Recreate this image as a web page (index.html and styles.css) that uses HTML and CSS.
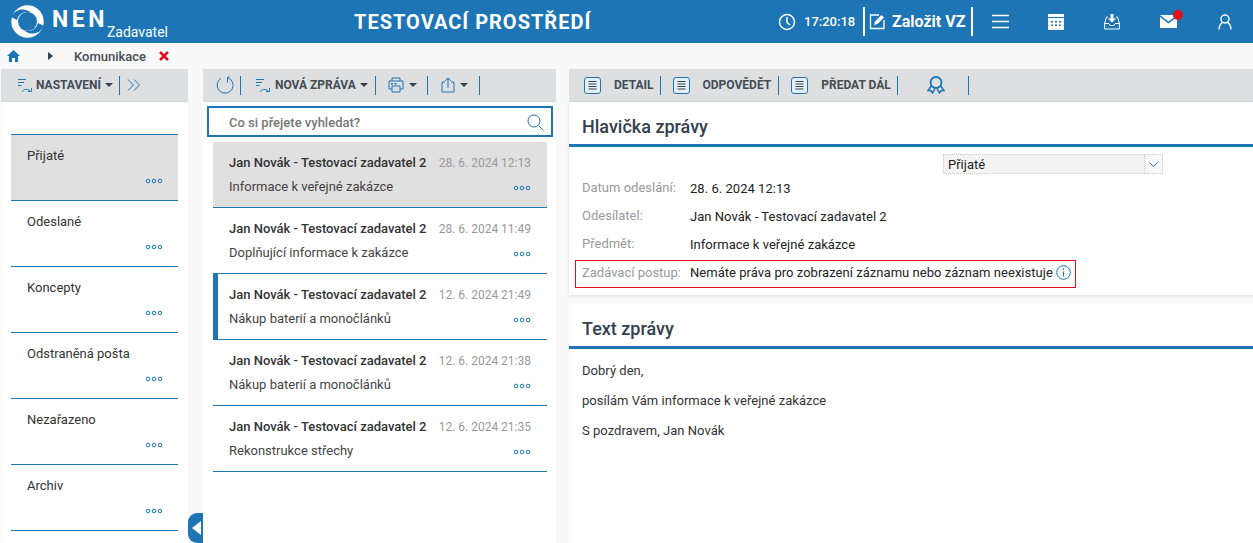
FILE: index.html
```html
<!DOCTYPE html>
<html lang="cs">
<head>
<meta charset="utf-8">
<title>NEN Zadavatel</title>
<link rel="stylesheet" href="styles.css">
</head>
<body>
<svg class="defs" width="0" height="0">
  <defs>
    <symbol id="doc" viewBox="0 0 17 17"><rect x=".5" y=".5" width="16" height="16" rx="2.500" fill="#e6eef5" stroke="#1d75b5" stroke-width="1"/><path d="M4.500 4.500h8M4.500 7h8M4.500 9.500h8M4.500 12h8" stroke="#33404d" stroke-width="1" fill="none"/></symbol>
    <symbol id="sort" viewBox="0 0 16 16"><path d="M1 2.500h8M1 5.500h6M1 8.500h3.500" stroke="#1d75b5" stroke-width="1" fill="none"/><path d="M5 15c1.500-3 5.500-3.500 8-1M14.500 11v3.500h-3.500" stroke="#1d75b5" stroke-width="1" fill="none"/></symbol>
    <symbol id="ribbon" viewBox="0 0 18 18"><circle cx="9" cy="6.500" r="5.500" fill="none" stroke="#1d75b5" stroke-width="1.800"/><path d="M4.500 10L1 14.500l3 .3 1.500 2.200L8 12.500M13.500 10l3.500 4.500-3 .3-1.500 2.200-2.500-4.500" fill="none" stroke="#1d75b5" stroke-width="1.500"/></symbol>
    <symbol id="dots" viewBox="0 0 18 6"><circle cx="3" cy="3" r="1.800" fill="none" stroke="#1d75b5"/><circle cx="9" cy="3" r="1.800" fill="none" stroke="#1d75b5"/><circle cx="15" cy="3" r="1.800" fill="none" stroke="#1d75b5"/></symbol>
  </defs>
</svg>

<header class="topbar">
  <div class="brand">
    <svg class="logo" width="33" height="33" viewBox="0 0 33 33">
      <circle cx="16.500" cy="16.500" r="16.200" fill="#fff"/>
      <circle cx="16.500" cy="16.500" r="9.500" fill="#1d75b5"/>
      <path id="logo-slit" d="M0 12C4 4 13 2 20 7.500 13 6 8 8.500 6 15Z" fill="#1d75b5"/>
      <path d="M33 21C29 29 20 31 13 25.500 20 27 25 24.500 27 18Z" fill="#1d75b5"/>
    </svg>
    <span class="nen">NEN</span>
    <span class="role">Zadavatel</span>
  </div>
  <div class="env">TESTOVACÍ PROSTŘEDÍ</div>
  <div class="clock">
    <svg width="18" height="18" viewBox="0 0 18 18"><circle cx="9" cy="9" r="7.500" fill="none" stroke="#fff" stroke-width="1.500"/><path d="M9 4v5.500l3 2.500" fill="none" stroke="#fff" stroke-width="1.500"/></svg>
    <span>17:20:18</span>
  </div>
  <div class="create">
    <svg width="17" height="17" viewBox="0 0 17 17"><path d="M10 2H1.500v13.500H15V7" fill="none" stroke="#fff" stroke-width="1.300"/><path d="M5 12l1-3.500L12.500 2 15 4.500 8.500 11Z" fill="#fff"/></svg>
    <span>Založit VZ</span>
  </div>
  <nav class="topicons">
    <svg class="ic-menu" width="17" height="15" viewBox="0 0 17 15"><path d="M0 1.500h17M0 7.500h17M0 13.500h17" stroke="#fff" stroke-width="1.600"/></svg>
    <svg width="16" height="16" viewBox="0 0 16 16"><rect width="16" height="16" fill="#fff"/><path d="M0 3.500h16" stroke="#1d75b5"/><path d="M3 7h2v1.500H3zM7 7h2v1.500H7zM11 7h2v1.500h-2zM3 10.500h2V12H3zM7 10.500h2V12H7zM11 10.500h2V12h-2z" fill="#1d75b5"/></svg>
    <svg width="16" height="16" viewBox="0 0 16 16"><path d="M4 3H2.500L.7 9v6h14.600V9L13.500 3H12M.7 9.500h4.300l1 2h4l1-2h4.300" fill="none" stroke="#fff"/><path d="M6.500 0h3v4.500H12L8 8.500 4 4.500h2.500Z" fill="#fff"/></svg>
    <span class="mail">
      <svg width="17" height="13" viewBox="0 0 17 13"><path d="M0 0h17L8.500 6.500ZM0 2l8.500 6.500L17 2v11H0Z" fill="#fff"/></svg>
      <i class="mail-dot"></i>
    </span>
    <svg class="ic-user" width="14" height="16" viewBox="0 0 14 16"><circle cx="7" cy="5" r="4" fill="none" stroke="#fff" stroke-width="1.400"/><path d="M1 15.500c0-4 2.500-6.500 3.500-7M13 15.500c0-4-2.500-6.500-3.500-7" fill="none" stroke="#fff" stroke-width="1.400"/></svg>
  </nav>
</header>

<div class="crumbs">
  <svg width="13" height="12" viewBox="0 0 13 12"><path d="M6.500 0L13 6h-2v6H8V8H5v4H2V6H0Z" fill="#1d75b5"/></svg>
  <i class="crumb-arrow"></i>
  <span class="crumb-text">Komunikace</span>
  <svg width="10" height="10" viewBox="0 0 10 10"><path d="M1 1l8 8M9 1L1 9" stroke="#e2101c" stroke-width="2.600"/></svg>
</div>

<main class="columns">
  <aside class="col-left">
    <div class="toolbar tb-left">
      <svg class="ic-sort" width="16" height="16"><use href="#sort"/></svg>
      <b>NASTAVENÍ</b><i class="caret"></i>
      <i class="sep"></i>
      <svg width="14" height="12" viewBox="0 0 14 12"><path d="M1 .5l5.500 5.500L1 11.500M7 .5l5.500 5.500L7 11.500" fill="none" stroke="#1d75b5"/></svg>
    </div>
    <ul class="folders">
      <li class="folder active"><span>Přijaté</span><svg class="dots" width="18" height="6"><use href="#dots"/></svg></li>
      <li class="folder"><span>Odeslané</span><svg class="dots" width="18" height="6"><use href="#dots"/></svg></li>
      <li class="folder"><span>Koncepty</span><svg class="dots" width="18" height="6"><use href="#dots"/></svg></li>
      <li class="folder"><span>Odstraněná pošta</span><svg class="dots" width="18" height="6"><use href="#dots"/></svg></li>
      <li class="folder"><span>Nezařazeno</span><svg class="dots" width="18" height="6"><use href="#dots"/></svg></li>
      <li class="folder"><span>Archiv</span><svg class="dots" width="18" height="6"><use href="#dots"/></svg></li>
    </ul>
  </aside>

  <div class="collapse-tab"><i></i></div>

  <section class="col-mid">
    <div class="toolbar tb-mid">
      <svg width="18" height="18" viewBox="0 0 18 18"><path d="M11.500 1.500A8 8 0 1 1 5 2.300M11.500 1.500L13.500.5M11.500 1.500V6.500" fill="none" stroke="#1d75b5"/></svg>
      <i class="sep s1"></i>
      <svg class="ic-sort" width="16" height="16"><use href="#sort"/></svg>
      <b>NOVÁ ZPRÁVA</b><i class="caret"></i>
      <i class="sep"></i>
      <svg width="16" height="16" viewBox="0 0 16 16"><path d="M4 4V1h8v3M4 12H1V4h14v8h-3M4 9h8v6H4Z" fill="none" stroke="#1d75b5"/><path d="M3 6h2v1.500H3zM6.500 6h2v1.500h-2z" fill="#1d75b5"/></svg><i class="caret"></i>
      <i class="sep"></i>
      <svg width="14" height="16" viewBox="0 0 14 16"><path d="M4 5H1v10h12V5h-3M7 11V1M4 4l3-3 3 3" fill="none" stroke="#1d75b5"/></svg><i class="caret"></i>
      <i class="sep sep-end"></i>
    </div>
    <div class="search">
      <span>Co si přejete vyhledat?</span>
      <svg width="17" height="17" viewBox="0 0 17 17"><circle cx="7" cy="7" r="6" fill="none" stroke="#1d75b5"/><path d="M11.500 11.500l5 5" stroke="#1d75b5"/></svg>
    </div>
    <ul class="messages">
      <li class="msg active"><div class="row"><b>Jan Novák - Testovací zadavatel 2</b><time>28. 6. 2024 12:13</time></div><div class="row"><span>Informace k veřejné zakázce</span><svg class="dots" width="18" height="6"><use href="#dots"/></svg></div></li>
      <li class="msg"><div class="row"><b>Jan Novák - Testovací zadavatel 2</b><time>28. 6. 2024 11:49</time></div><div class="row"><span>Doplňující informace k zakázce</span><svg class="dots" width="18" height="6"><use href="#dots"/></svg></div></li>
      <li class="msg flagged"><div class="row"><b>Jan Novák - Testovací zadavatel 2</b><time>12. 6. 2024 21:49</time></div><div class="row"><span>Nákup baterií a monočlánků</span><svg class="dots" width="18" height="6"><use href="#dots"/></svg></div></li>
      <li class="msg"><div class="row"><b>Jan Novák - Testovací zadavatel 2</b><time>12. 6. 2024 21:38</time></div><div class="row"><span>Nákup baterií a monočlánků</span><svg class="dots" width="18" height="6"><use href="#dots"/></svg></div></li>
      <li class="msg"><div class="row"><b>Jan Novák - Testovací zadavatel 2</b><time>12. 6. 2024 21:35</time></div><div class="row"><span>Rekonstrukce střechy</span><svg class="dots" width="18" height="6"><use href="#dots"/></svg></div></li>
    </ul>
  </section>

  <section class="col-right">
    <div class="toolbar tb-right">
      <svg class="ic-doc" width="17" height="17"><use href="#doc"/></svg><b>DETAIL</b><i class="sep"></i>
      <svg class="ic-doc" width="17" height="17"><use href="#doc"/></svg><b>ODPOVĚDĚT</b><i class="sep sep-wide"></i>
      <svg class="ic-doc" width="17" height="17"><use href="#doc"/></svg><b>PŘEDAT DÁL</b><i class="sep"></i>
      <svg class="ic-ribbon" width="18" height="18"><use href="#ribbon"/></svg><i class="sep s-last"></i>
    </div>
    <article class="panel panel-head">
      <h2>Hlavička zprávy</h2>
      <div class="select-row">
        <div class="select"><span>Přijaté</span><i class="select-btn"><svg width="9" height="5" viewBox="0 0 9 5"><path d="M.5.500l4 4 4-4" fill="none" stroke="#1d75b5"/></svg></i></div>
      </div>
      <dl class="fields">
        <div class="field"><dt>Datum odeslání:</dt><dd>28. 6. 2024 12:13</dd></div>
        <div class="field"><dt>Odesílatel:</dt><dd>Jan Novák - Testovací zadavatel 2</dd></div>
        <div class="field"><dt>Předmět:</dt><dd>Informace k veřejné zakázce</dd></div>
        <div class="field boxed"><dt>Zadávací postup:</dt><dd>Nemáte práva pro zobrazení záznamu nebo záznam neexistuje
          <svg class="info" width="15" height="15" viewBox="0 0 15 15"><circle cx="7.500" cy="7.500" r="6.800" fill="none" stroke="#1d75b5"/><path d="M7.500 6.500v5M7.500 3.500v1.500" stroke="#1d75b5" stroke-width="1.200"/></svg></dd></div>
      </dl>
    </article>
    <article class="panel panel-text">
      <h2>Text zprávy</h2>
      <div class="body-text">
        <p>Dobrý den,</p>
        <p>posílám Vám informace k veřejné zakázce</p>
        <p>S pozdravem, Jan Novák</p>
      </div>
    </article>
  </section>
</main>
</body>
</html>
```
FILE: styles.css
```css
* { box-sizing: border-box; }
html, body { margin: 0; padding: 0; height: 100%; }
body {
  width: 1253px; height: 543px; overflow: hidden;
  background: #f9f9f9; color: #333;
  font-family: Roboto, "Liberation Sans", sans-serif;
  font-size: 13px;
  display: flex; flex-direction: column;
}
ul, dl, dd, p, h2 { margin: 0; padding: 0; list-style: none; }
i { display: block; font-style: normal; }
.defs { position: absolute; }

.topbar {
  height: 43px; flex: none; background: #1d75b5; color: #fff;
  display: flex; align-items: center;
}
.brand { width: 205px; height: 43px; display: flex; align-items: center; padding-left: 11px; }
.logo { flex: none; margin-top: -1px; }
.nen { font-size: 23px; line-height: 1; font-weight: 700; letter-spacing: 3.500px; margin-left: 8px; margin-top: -4px; }
.role { font-size: 14px; margin-top: 20px; margin-left: -1px; }
.env { font-size: 20px; font-weight: 700; letter-spacing: 1px; margin-left: 149px; width: 424px; }
.clock { display: flex; align-items: center; gap: 8px; font-size: 13px; font-weight: 500; width: 85px; }
.create {
  width: 110px; height: 29px; display: flex; align-items: center; gap: 6px; padding-left: 4px;
  border-left: 2px solid #fff; border-right: 2px solid #fff;
  font-size: 16px; font-weight: 700;
}
.topicons { flex: 1; display: flex; align-items: center; padding-left: 19px; gap: 40px; }
.topicons svg { display: block; }
.ic-menu { margin-right: -1px; }
.ic-user { margin-left: 1px; }
.mail { position: relative; display: block; }
.mail-dot { position: absolute; width: 10px; height: 10px; border-radius: 50%; background: #e2101c; left: 13px; top: -5px; }

.crumbs { height: 26px; flex: none; display: flex; align-items: center; padding-left: 7px; background: #f9f9f9; }
.crumb-arrow { width: 0; height: 0; border-left: 5px solid #33404d; border-top: 4px solid transparent; border-bottom: 4px solid transparent; margin-left: 28px; }
.crumb-text { font-weight: 500; color: #444c55; margin-left: 21px; }
.crumbs svg:last-child { margin-left: 13px; }

.columns { flex: 1; display: flex; padding-left: 1px; min-height: 0; }
.toolbar { height: 33px; background: #dddfe1; display: flex; align-items: center; flex: none; border-bottom: 1px solid #d5d7d9; }
.toolbar b { font-size: 12px; font-weight: 700; color: #444c55; }
.sep { width: 1px; height: 19px; background: #1d75b5; flex: none; }
.caret { width: 0; height: 0; border-top: 4px solid #33404d; border-left: 4px solid transparent; border-right: 4px solid transparent; flex: none; }

.col-left { width: 187px; background: #fff; flex: none; display: flex; flex-direction: column; }
.tb-left { padding-left: 16px; }
.tb-left b { margin-left: 3px; }
.tb-left .caret { margin-left: 4px; }
.tb-left .sep { margin-left: 6px; margin-right: 7px; }
.folders { padding: 32px 10px 0; }
.folder {
  height: 66px; border-top: 1px solid #1d75b5; padding: 13px 16px 0; position: relative;
  color: #333; font-weight: 400;
}
.folder:last-child { border-bottom: 1px solid #1d75b5; height: 67px; }
.folder.active { background: #e0e0e0; }
.folder span { display: block; line-height: 15px; }
.folder .dots { position: absolute; right: 15px; top: 43px; }

.collapse-tab { width: 15px; flex: none; display: flex; align-items: flex-end; }
.collapse-tab i {
  width: 15px; height: 30px; background: #1d75b5; border-radius: 9px 0 0 9px;
  display: flex; align-items: center; justify-content: center;
}
.collapse-tab i::before { content: ""; border-right: 9px solid #fff; border-top: 7px solid transparent; border-bottom: 7px solid transparent; margin-left: 2px; }

.col-mid { width: 353px; flex: none; background: #fff; display: flex; flex-direction: column; margin-right: 13px; }
.tb-mid { padding-left: 13px; }
.tb-mid .s1 { margin: 0 14px 0 6px; }
.tb-mid b { margin-left: 4px; }
.tb-mid b + .caret { margin-left: 4px; }
.tb-mid .caret + .sep { margin: 0 12px 0 7px; }
.tb-mid svg + .caret { margin-left: 5px; }
.tb-mid svg + .caret + .sep { margin: 0 13px 0 10px; }
.tb-mid svg + .caret + .sep-end { margin-left: 11px; }
.search {
  margin: 4px 3px 0 4px; height: 31px; border: 2px solid #1d75b5; background: #fff;
  display: flex; align-items: center; justify-content: space-between; padding: 1px 7px 0 20px;
  font-weight: 500; color: #777; flex: none;
}
.messages { padding: 5px 9px 0 10px; }
.msg { height: 66px; border-bottom: 1px solid #1d75b5; padding: 12px 16px 0; position: relative; }
.msg.active { background: #e0e0e0; }
.msg.flagged::before { content: ""; position: absolute; left: 0; top: 0; bottom: 0; width: 5px; background: #1d75b5; }
.row { display: flex; justify-content: space-between; align-items: center; height: 17px; }
.row + .row { margin-top: 7px; color: #444; }
.row + .row .dots { margin-top: 2px; }
.row b { font-weight: 500; color: #333; }
.row time { color: #999; font-size: 12px; }

.col-right { flex: 1; display: flex; flex-direction: column; min-width: 0; }
.tb-right { padding-left: 15px; }
.tb-right b { margin-left: 13px; }
.tb-right .sep { margin-left: 6px; margin-right: 12px; }
.tb-right .sep-wide { margin-left: 7px; }
.tb-right .ic-ribbon { margin-left: 17px; }
.tb-right .s-last { margin-left: 23px; }
.panel { background: #fff; box-shadow: 0 1px 3px rgba(0,0,0,.12); }
.panel h2 {
  height: 45px; border-bottom: 3px solid #1d75b5; padding: 15px 13px 0; font-size: 18px; line-height: 20px;
  font-weight: 500; color: #33404d;
}
.panel-head { height: 193px; }
.select-row { display: flex; padding: 7px 0 0 374px; }
.select { width: 220px; height: 20px; background: #f4f4f4; border: 1px dotted #ccc; display: flex; justify-content: space-between; }
.select span { padding-left: 4px; line-height: 19px; color: #222; }
.select-btn { width: 18px; border-left: 1px dotted #ccc; background: #f7f7f7; display: flex; align-items: center; justify-content: center; }
.fields { margin: 5px 0 0 6px; }
.field { display: flex; height: 28px; padding: 0 0 0 7px; align-items: flex-start; line-height: 17px; }
.field dt { width: 108px; color: #999; flex: none; }
.field dd { color: #222; display: flex; align-items: center; gap: 3px; padding-top: 1px; letter-spacing: .035px; }
.field.boxed { width: 501px; height: 28px; border: 1px solid #e2101c; padding: 3px 0 0 6px; margin-top: -3px; }
.field.boxed dd { padding-top: 0; }
.info { flex: none; }
.panel-text { flex: 1; margin-top: 9px; box-shadow: none; }
.body-text { padding: 13px 13px 0; color: #333; letter-spacing: .03px; }
.body-text p { line-height: 17px; margin-bottom: 13px; }
```
